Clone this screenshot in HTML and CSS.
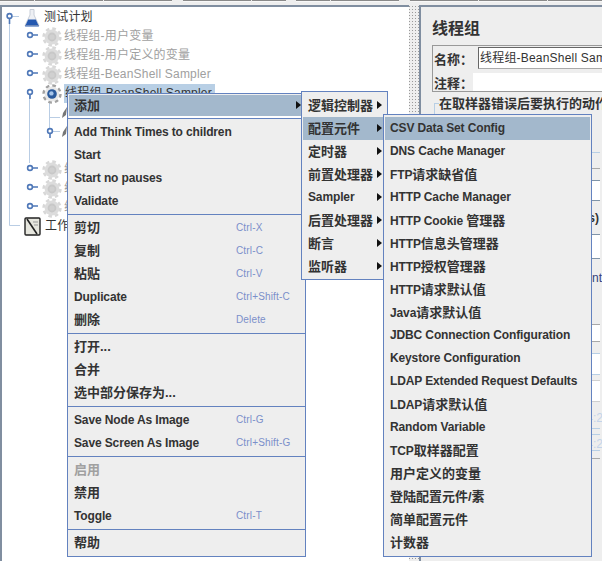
FILE: index.html
```html
<!DOCTYPE html>
<html lang="zh-CN">
<head>
<meta charset="utf-8">
<title>测试计划</title>
<link rel="stylesheet" href="styles.css">
</head>
<body>
<svg class="defs" width="0" height="0" aria-hidden="true">
  <symbol id="gear" viewBox="0 0 20 20">
    <circle cx="10" cy="10" r="8.4" fill="none" stroke="#d8d8d8" stroke-width="2.6" stroke-dasharray="3.6 3"/>
    <circle cx="10" cy="10" r="7.4" fill="#dcdcdc"/>
    <circle cx="10" cy="10" r="4.4" fill="#c8c8c8"/>
    <circle cx="10" cy="10" r="2.6" fill="#d0d0d0"/>
  </symbol>
  <symbol id="gear-on" viewBox="0 0 20 20">
    <circle cx="10" cy="10" r="8.4" fill="none" stroke="#a2a2a2" stroke-width="2.6" stroke-dasharray="3.6 3"/>
    <circle cx="10" cy="10" r="7.4" fill="#e8e8e8"/>
    <circle cx="10" cy="10" r="4.8" fill="#2a5a9c"/>
    <circle cx="9.4" cy="9.4" r="2.2" fill="#a8c6ea"/>
  </symbol>
</svg>
<div class="topstrip">
  <span class="seg"></span><span class="seg"></span><span class="seg"></span><span class="seg"></span><span class="seg"></span><span class="gap"></span>
  <span class="seg"></span><span class="seg"></span><span class="seg"></span><span class="gap"></span>
  <span class="seg"></span><span class="seg"></span><span class="seg"></span><span class="gap"></span>
  <span class="seg"></span><span class="seg"></span><span class="seg"></span><span class="seg"></span><span class="seg"></span><span class="seg"></span>
</div>
<div class="split">
  <section class="tree">
    <svg class="lines" width="120" height="240" aria-hidden="true">
      <g fill="none" stroke="#b9cde4" stroke-width="1">
        <path d="M9.5 16V225.5H20"/>
        <path d="M9.5 16.5H19"/>
        <path d="M29.5 92V163"/>
        <path d="M49.5 102V131"/>
        <path d="M49.5 117.5H60"/>
        <path d="M49.5 131.5H60"/>
      </g>
      <g fill="#fff" stroke="#4f78b8" stroke-width="1.6">
        <path d="M9.5 16V24" fill="none"/>
        <circle cx="9.5" cy="16" r="2.4"/>
        <path d="M30 35H38M30 54H38M30 73H38M30 168H38M30 187H38M30 206H38" fill="none"/>
        <circle cx="30" cy="35" r="2.4"/>
        <circle cx="30" cy="54" r="2.4"/>
        <circle cx="30" cy="73" r="2.4"/>
        <path d="M30 92V99" fill="none"/>
        <circle cx="30" cy="92" r="2.4"/>
        <path d="M50 131V138" fill="none"/>
        <circle cx="50" cy="131" r="2.4"/>
        <circle cx="30" cy="168" r="2.4"/>
        <circle cx="30" cy="187" r="2.4"/>
        <circle cx="30" cy="206" r="2.4"/>
      </g>
    </svg>
    <div class="row root">
      <svg class="ico-root" width="16" height="18" viewBox="0 0 16 18" aria-hidden="true">
        <path d="M6 0.5H10V6L15 16.5H1L6 6Z" fill="#eef0f4" stroke="#c8ced8"/>
        <path d="M4.2 10.5H11.8L15 17.5H1Z" fill="#2458b0"/>
        <path d="M1 16.5H15" stroke="#6d88b8"/>
      </svg>
      <span class="label">测试计划</span>
    </div>
    <div class="row off"><svg class="ico-gear"><use href="#gear"/></svg><span class="label">线程组-用户变量</span></div>
    <div class="row off"><svg class="ico-gear"><use href="#gear"/></svg><span class="label">线程组-用户定义的变量</span></div>
    <div class="row off"><svg class="ico-gear"><use href="#gear"/></svg><span class="label">线程组-BeanShell Sampler</span></div>
    <div class="row"><svg class="ico-gear"><use href="#gear-on"/></svg><span class="label sel">线程组-BeanShell Sampler</span></div>
    <div class="row child"><svg class="ico-tool" width="6" height="12" viewBox="0 0 6 12" aria-hidden="true"><path d="M5 0L1 6L0 11L4 8Z" fill="#777"/></svg></div>
    <div class="row child"><svg class="ico-tool" width="6" height="12" viewBox="0 0 6 12" aria-hidden="true"><path d="M5 0L1 6L0 11L4 8Z" fill="#777"/></svg></div>
    <div class="row"></div>
    <div class="row off"><svg class="ico-gear"><use href="#gear"/></svg><span class="label">线程组</span></div>
    <div class="row off"><svg class="ico-gear"><use href="#gear"/></svg><span class="label">线程组</span></div>
    <div class="row off"><svg class="ico-gear"><use href="#gear"/></svg><span class="label">线程组</span></div>
    <div class="row root">
      <svg class="ico-book" width="17" height="19" viewBox="0 0 17 19" aria-hidden="true">
        <rect x="1" y="1" width="15" height="17" rx="1" fill="#e6e6de" stroke="#222" stroke-width="1.4"/>
        <path d="M3 2L13 17" stroke="#222" stroke-width="1.6"/>
        <path d="M9 5H14M10 8H14" stroke="#999" stroke-width="1"/>
      </svg>
      <span class="label">工作台</span>
    </div>
  </section>
  <div class="divider"></div>
  <section class="panel">
    <h1 class="title">线程组</h1>
    <div class="namebox">
      <div class="field"><span class="flabel">名称：</span><span class="finput">线程组-BeanShell Sampler</span></div>
      <div class="field second"><span class="flabel">注释：</span><span class="farea"></span></div>
    </div>
    <div class="legend">在取样器错误后要执行的动作</div>
    <div class="rest">
      <div class="band b1"></div>
      <div class="band b2"></div>
      <div class="band b3"></div>
      <div class="band b4"></div>
      <div class="band b5"><span class="peek dark">Seconds)</span></div>
      <div class="band b6"></div>
      <div class="band b7"><span class="peek blue">Count</span></div>
      <div class="band b8"></div>
      <div class="band b9"></div>
      <div class="band b10"></div>
      <div class="band b11"></div>
      <div class="band b12"></div>
      <div class="band b13"><span class="peek pale">14:2</span></div>
      <div class="band b14"></div>
      <div class="band b15"><span class="peek pale">14:2</span></div>
      <div class="band b16"></div>
    </div>
  </section>
</div>

<div class="menu m1">
  <div class="item hot more"><span class="cj">添加</span></div>
  <div class="sep first"></div>
  <div class="item lat">Add Think Times to children</div>
  <div class="item lat">Start</div>
  <div class="item lat">Start no pauses</div>
  <div class="item lat">Validate</div>
  <div class="sep"></div>
  <div class="item key"><span class="cj">剪切</span><span class="sc">Ctrl-X</span></div>
  <div class="item key"><span class="cj">复制</span><span class="sc">Ctrl-C</span></div>
  <div class="item key"><span class="cj">粘贴</span><span class="sc">Ctrl-V</span></div>
  <div class="item key lat">Duplicate<span class="sc">Ctrl+Shift-C</span></div>
  <div class="item key"><span class="cj">删除</span><span class="sc">Delete</span></div>
  <div class="sep"></div>
  <div class="item"><span class="cj">打开...</span></div>
  <div class="item"><span class="cj">合并</span></div>
  <div class="item"><span class="cj">选中部分保存为...</span></div>
  <div class="sep"></div>
  <div class="item key lat">Save Node As Image<span class="sc">Ctrl-G</span></div>
  <div class="item key lat">Save Screen As Image<span class="sc">Ctrl+Shift-G</span></div>
  <div class="sep"></div>
  <div class="item dim"><span class="cj">启用</span></div>
  <div class="item"><span class="cj">禁用</span></div>
  <div class="item key lat">Toggle<span class="sc">Ctrl-T</span></div>
  <div class="sep"></div>
  <div class="item"><span class="cj">帮助</span></div>
</div>

<div class="menu m2">
  <div class="item more"><span class="cj">逻辑控制器</span></div>
  <div class="item hot more"><span class="cj">配置元件</span></div>
  <div class="item more"><span class="cj">定时器</span></div>
  <div class="item more"><span class="cj">前置处理器</span></div>
  <div class="item more">Sampler</div>
  <div class="item more"><span class="cj">后置处理器</span></div>
  <div class="item more"><span class="cj">断言</span></div>
  <div class="item more"><span class="cj">监听器</span></div>
</div>

<div class="menu m3">
  <div class="item hot">CSV Data Set Config</div>
  <div class="item">DNS Cache Manager</div>
  <div class="item">FTP<span class="cj">请求缺省值</span></div>
  <div class="item">HTTP Cache Manager</div>
  <div class="item">HTTP Cookie <span class="cj">管理器</span></div>
  <div class="item">HTTP<span class="cj">信息头管理器</span></div>
  <div class="item">HTTP<span class="cj">授权管理器</span></div>
  <div class="item">HTTP<span class="cj">请求默认值</span></div>
  <div class="item">Java<span class="cj">请求默认值</span></div>
  <div class="item">JDBC Connection Configuration</div>
  <div class="item">Keystore Configuration</div>
  <div class="item">LDAP Extended Request Defaults</div>
  <div class="item">LDAP<span class="cj">请求默认值</span></div>
  <div class="item">Random Variable</div>
  <div class="item">TCP<span class="cj">取样器配置</span></div>
  <div class="item"><span class="cj">用户定义的变量</span></div>
  <div class="item"><span class="cj">登陆配置元件/素</span></div>
  <div class="item"><span class="cj">简单配置元件</span></div>
  <div class="item"><span class="cj">计数器</span></div>
</div>
</body>
</html>
```

FILE: styles.css
```css
* { box-sizing: border-box; }
html, body { margin: 0; height: 100%; overflow: hidden; }
body {
  width: 602px;
  height: 561px;
  position: relative;
  background: #eeeeee;
  font-family: "Liberation Sans", "Noto Sans CJK SC", sans-serif;
  color: #333333;
  display: flex;
  flex-direction: column;
}
.defs { position: absolute; }

.topstrip { height: 5px; display: flex; background: #eeeeee; flex: none; overflow: hidden; }
.seg { width: 34px; height: 2px; margin-right: 0.5px; background: #f8f8f8; border-top: 1px solid #8a8a8a; flex: none; }
.gap { width: 10px; flex: none; }

.split { flex: 1; display: flex; min-height: 0; }

.tree {
  width: 409px;
  position: relative;
  background: #ffffff;
  border-left: 2px solid #808ea0;
  border-top: 2px solid #808ea0;
  padding-top: 1px;
  font-size: 12px;
}
.lines { position: absolute; left: -2px; top: -7px; }
.row { height: 19px; display: flex; align-items: center; padding-left: 40px; position: relative; }
.row.root { padding-left: 22px; gap: 4px; }
.row.child { padding-left: 60px; }
.row.off .label { color: #a0a0a0; }
.ico-gear { width: 20px; height: 20px; flex: none; margin-right: 2px; }
.ico-root, .ico-book { flex: none; }
.label { white-space: nowrap; line-height: 19px; letter-spacing: 0.2px; }
.sel { background: #b8cfe5; color: #333333; padding: 0 3px 0 1px; }

.divider {
  width: 10px;
  flex: none;
  background-color: #eeeeee;
  background-image: radial-gradient(#9a9a9a 0.7px, transparent 0.8px);
  background-size: 3px 3px;
  background-position: 5px 0;
}

.panel {
  flex: 1;
  min-width: 0;
  border-left: 2px solid #808ea0;
  border-top: 2px solid #808ea0;
  padding: 0 0 0 11px;
  overflow: hidden;
}
.title { margin: 12px 0 0; font-size: 16px; line-height: 20px; font-weight: 700; color: #333333; }
.namebox { margin: 6px 0 0; width: 200px; height: 47px; border: 1px solid #999999; white-space: nowrap; }
.field { display: flex; align-items: center; height: 24px; font-size: 12px; font-weight: 700; padding-left: 1px; }
.second { height: 18px; margin-top: 3px; }
.flabel { width: 39px; flex: none; font-size: 13px; }
.finput { margin-left: 5px; flex: 1; min-width: 0; overflow: hidden; height: 22px; line-height: 20px; background: #fff; border: 1px solid #aaaaaa; border-top-color: #666; border-left-color: #666; font-weight: 400; padding-left: 1px; font-size: 12px; letter-spacing: 0.2px; }
.farea { flex: 1; height: 18px; background: #fff; }
.legend { position: relative; margin: 3px 0 0 7px; font-size: 13px; line-height: 18px; font-weight: 700; white-space: nowrap; color: #333333; }
.legend::before {
  content: "";
  position: absolute;
  left: -5px;
  top: 8px;
  width: 4px;
  height: 12px;
  border-left: 1px solid #b8cfe5;
  border-top: 1px solid #b8cfe5;
}

.rest { margin-left: -11px; width: 179px; font-size: 12px; }
.band { position: relative; }
.peek { position: absolute; white-space: nowrap; line-height: 14px; }
.dark { color: #333333; font-weight: 700; top: 10px; right: 1px; }
.blue { color: #33407a; top: 12px; right: -2px; }
.pale { color: #c4d4ea; right: -3px; }
.b13 .pale { top: 9px; }
.b15 .pale { top: 2px; }
.b1 { height: 40px; border-bottom: 1px solid #b8cfe5; }
.b2 { height: 16px; border-bottom: 1px solid #a8a8a8; }
.b3 { height: 12px; border-bottom: 1px solid #8094a8; }
.b4 { height: 20px; background: #fff; border-bottom: 1px solid #8094a8; }
.b5 { height: 34px; border-bottom: 1px solid #8094a8; }
.b6 { height: 24px; background: #fff; border-bottom: 1px solid #8094a8; }
.b7 { height: 66px; border-bottom: 1px solid #a8a8a8; }
.b8 { height: 17px; background: #fff; border-bottom: 1px solid #a8a8a8; }
.b9 { height: 12px; border-bottom: 1px solid #b8cfe5; }
.b10 { height: 21px; background: #fff; border-bottom: 1px solid #b8cfe5; }
.b11 { height: 6px; border-bottom: 1px solid #d0d0d0; }
.b12 { height: 21px; background: #fff; border-bottom: 1px solid #cfcfcf; }
.b13 { height: 27px; border-bottom: 1px solid #b8cfe5; }
.b14 { height: 6px; border-bottom: 1px solid #b8cfe5; }
.b15 { height: 16px; border-bottom: 1px solid #b8cfe5; }
.b16 { height: 8px; border-bottom: 1px solid #a8a8a8; }

.menu {
  position: absolute;
  background: #eeeeee;
  border: 1px solid #6382bf;
  padding: 1px;
  font-size: 12px;
  letter-spacing: -0.13px;
  font-weight: 700;
  color: #333333;
}
.m1 { left: 67px; top: 93px; width: 239px; height: 464px; }
.m2 { left: 301px; top: 91px; width: 87px; height: 189px; padding-top: 2px; }
.m3 { left: 383px; top: 114px; width: 209px; height: 443px; padding-top: 2px; }
.item { height: 23px; line-height: 23px; padding-left: 5px; position: relative; white-space: nowrap; }
.lat { line-height: 25px; }
.hot { background: #a3b8cc; }
.m1 .hot { border-bottom: 2px solid #ffffff; line-height: 21px; }
.cj { font-size: 13px; letter-spacing: 0; }
.dim { color: #a0a0a0; }
.sc {
  position: absolute;
  left: 167px;
  top: 0;
  line-height: 23px;
  font-size: 10px;
  font-weight: 400;
  color: #7b8fca;
  letter-spacing: 0.15px;
}
.more::after {
  content: "";
  position: absolute;
  right: 4px;
  top: 7px;
  border-left: 5px solid #111111;
  border-top: 4.5px solid transparent;
  border-bottom: 4.5px solid transparent;
}
.m1 .more::after { right: 3px; top: 6px; }
.sep { height: 2px; border-top: 1px solid #6382bf; margin: 2px -1px 0; }
.sep.first { height: 2px; margin-top: 0; }
```
